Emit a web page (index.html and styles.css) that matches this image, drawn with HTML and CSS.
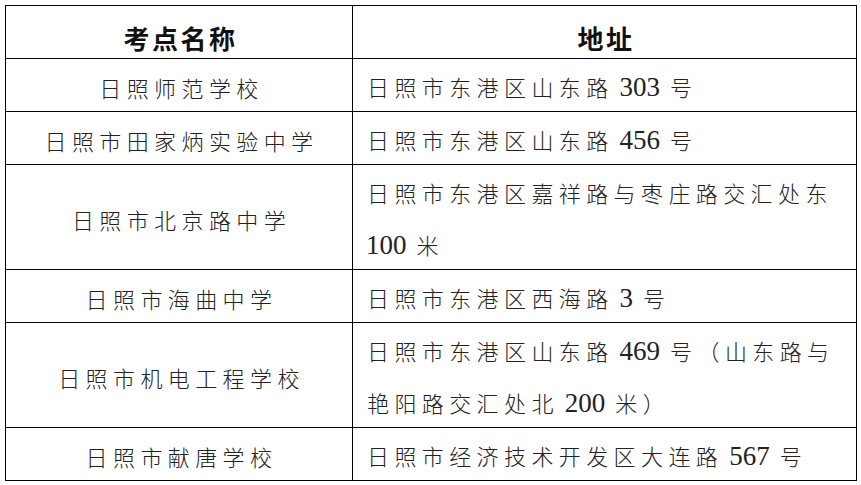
FILE: index.html
```html
<!DOCTYPE html>
<html lang="zh-CN">
<head>
<meta charset="utf-8">
<title>考点名称与地址</title>
<link rel="stylesheet" href="styles.css">
</head>
<body>
<div class="table" role="table">
  <div class="cell head" role="columnheader">考点名称</div>
  <div class="cell head" role="columnheader">地址</div>

  <div class="cell name">日照师范学校</div>
  <div class="cell addr">日照市东港区山东路<span class="num">303</span>号</div>

  <div class="cell name">日照市田家炳实验中学</div>
  <div class="cell addr">日照市东港区山东路<span class="num">456</span>号</div>

  <div class="cell name">日照市北京路中学</div>
  <div class="cell addr">日照市东港区嘉祥路与枣庄路交汇处东<span class="num first">100</span>米</div>

  <div class="cell name">日照市海曲中学</div>
  <div class="cell addr">日照市东港区西海路<span class="num">3</span>号</div>

  <div class="cell name">日照市机电工程学校</div>
  <div class="cell addr">日照市东港区山东路<span class="num">469</span>号（山东路与艳阳路交汇处北<span class="num">200</span>米）</div>

  <div class="cell name">日照市献唐学校</div>
  <div class="cell addr">日照市经济技术开发区大连路<span class="num">567</span>号</div>
</div>
</body>
</html>
```

FILE: styles.css
```css
html, body {
  margin: 0;
  padding: 0;
  background: #ffffff;
}

body {
  font-family: "Noto Sans CJK SC", "Noto Sans", sans-serif;
  color: #222222;
}

.table {
  display: grid;
  grid-template-columns: 346px 503px;
  grid-template-rows: 52px 52px 52px 104px 52px 104px 52px;
  gap: 1px;
  padding: 1px;
  background: #000000;
  width: max-content;
  margin: 5px 0 0 5px;
}

.cell {
  box-sizing: border-box;
  background: #ffffff;
  overflow: hidden;
  font-size: 22px;
  font-weight: 300;
  letter-spacing: 5.4px;
}

.head {
  text-align: center;
  font-size: 26px;
  font-weight: 700;
  letter-spacing: 2.5px;
  color: #111111;
  padding: 13px 0 0 3px;
  line-height: 38px;
}

.name {
  display: flex;
  justify-content: center;
  align-items: center;
  padding: 3px 0 0 5px;
  line-height: 40px;
}

.addr {
  padding: 1px 10px 0 14px;
  line-height: 52px;
}

.num {
  font-family: "Liberation Serif", "Times New Roman", serif;
  font-size: 27px;
  font-weight: 400;
  line-height: 1;
  letter-spacing: 0;
  margin: 0 10px 0 6px;
}

.num.first {
  margin-left: -1px;
}
```
